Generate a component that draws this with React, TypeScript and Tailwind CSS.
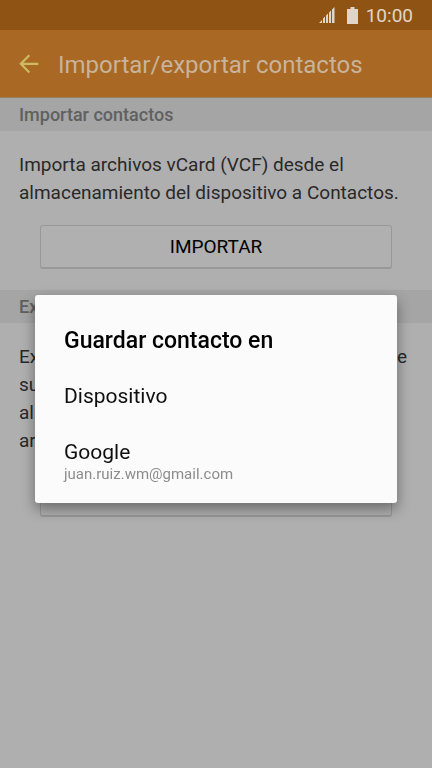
import type { ReactNode } from "react";

function StatusBar() {
  return (
    <div className="flex h-[30px] items-center justify-end bg-[#8f5413] pr-[19px] text-[#dfd6cb]">
      <svg className="mr-3 h-4 w-4" viewBox="0 0 16 16" fill="currentColor" aria-hidden="true">
        <path d="M0 16L3 13V16ZM4 16V11.5L6 9.5V16ZM7 16V8.5L9 6.5V16ZM10 16V5.5L12 3.5V16ZM13 16V2.5L15.5 0V16Z" />
      </svg>
      <svg className="mr-2 h-[17px] w-[11px]" viewBox="0 0 11 17" fill="currentColor" aria-hidden="true">
        <path d="M3.5 0H7.5V2H11V17H0V2H3.5Z" />
      </svg>
      <span className="pt-0.5 text-[19px] leading-7">10:00</span>
    </div>
  );
}

function AppBar() {
  return (
    <header className="flex h-[68px] items-center border-b border-[#98815f] bg-[#a96824] pl-[19px]">
      <button type="button" aria-label="Atrás" className="mr-[19px] text-[#cdbb60]">
        <svg className="block h-5 w-5" viewBox="0 0 20 20" fill="none" stroke="currentColor" strokeWidth="2.2" aria-hidden="true">
          <path d="M10.3 1.2L1.8 9.8L10.3 18.4M2 9.8H19.3" />
        </svg>
      </button>
      <h1 className="pt-0.5 text-2xl whitespace-nowrap text-[#c8b39b]">Importar/exportar contactos</h1>
    </header>
  );
}

function Section({ title, action, children }: { title: string; action: string; children: ReactNode }) {
  return (
    <section className="pb-[21px]">
      <h2 className="bg-[#a5a5a5] px-[19px] text-lg leading-[33px] font-medium text-[#606060]">{title}</h2>
      <p className="px-[19px] pt-5 text-[19px] leading-7 whitespace-nowrap text-[#292929]">{children}</p>
      <div className="px-10 pt-[18px]">
        <button
          type="button"
          className="block h-11 w-full rounded-[3px] border border-b-2 border-[#989898] bg-[#b0b0b0] pt-0.5 text-[19px] text-black"
        >
          {action}
        </button>
      </div>
    </section>
  );
}

function SaveDialog() {
  return (
    <div className="fixed inset-x-0 top-[30px] bottom-0 flex items-center px-[35px]">
      <div
        role="dialog"
        aria-modal="true"
        aria-labelledby="save-title"
        className="w-full rounded-[3px] bg-[#fbfbfb] px-[29px] pt-7 pb-[19px] shadow-[0_6px_14px_rgba(0,0,0,0.4)]"
      >
        <h2 id="save-title" className="text-[23px] leading-9 font-medium text-black">
          Guardar contacto en
        </h2>
        <button type="button" className="mt-[19px] block w-full text-left text-[21px] leading-9 text-[#101010]">
          Dispositivo
        </button>
        <button type="button" className="mt-[26px] block w-full text-left">
          <span className="block text-[21px] leading-6 text-[#101010]">Google</span>
          <span className="block text-[15px] leading-5 text-[#8c8c8c]">juan.ruiz.wm@gmail.com</span>
        </button>
      </div>
    </div>
  );
}

export default function App() {
  return (
    <div className="min-h-screen bg-[#afafaf] font-['Roboto',sans-serif]">
      <StatusBar />
      <AppBar />
      <main>
        <Section title="Importar contactos" action="IMPORTAR">
          Importa archivos vCard (VCF) desde el
          <br />
          almacenamiento del dispositivo a Contactos.
        </Section>
        <Section title="Exportar contactos" action="EXPORTAR">
          Exporta los contactos almacenados dentro de
          <br />
          su dispositivo como archivos vCard al
          <br />
          almacenamiento, donde se guardan los
          <br />
          archivos (VCF).
        </Section>
      </main>
      <SaveDialog />
    </div>
  );
}
